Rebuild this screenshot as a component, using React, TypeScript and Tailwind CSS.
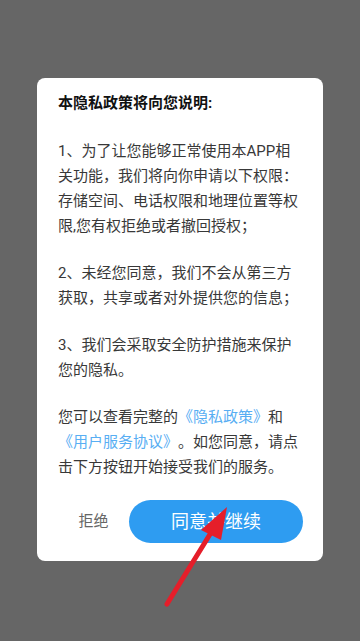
import React from "react";

export default function App() {
  return (
    <div
      className="relative w-[360px] h-[641px] bg-[#666666] overflow-hidden [text-spacing-trim:space-all]"
      style={{ fontFamily: 'Roboto, "Noto Sans CJK SC", sans-serif' }}
    >
      <div className="pt-[78px] flex justify-center">
        <div className="w-[286px] bg-white rounded-[8px] pt-[13px] pb-[18px]">
          <div className="px-[21px] text-[15px] leading-[25px] text-[#383838]">
            <p className="font-bold text-[#111]">本隐私政策将向您说明:</p>
            <p className="mt-[23px]">
              1、为了让您能够正常使用本APP相关功能，我们将向你申请以下权限：存储空间、电话权限和地理位置等权限,您有权拒绝或者撤回授权；
            </p>
            <p className="mt-[22px]">
              2、未经您同意，我们不会从第三方获取，共享或者对外提供您的信息；
            </p>
            <p className="mt-[22px]">3、我们会采取安全防护措施来保护您的隐私。</p>
            <p className="mt-[22px]">
              您可以查看完整的<span className="text-[#58AEF3]">《隐私政策》</span>和<span className="text-[#58AEF3]">《用户服务协议》</span>。如您同意，请点击下方按钮开始接受我们的服务。
            </p>
          </div>
          <div className="mt-[20px] flex items-center pl-[21px] pr-[20px]">
            <div className="flex-1 text-center text-[15px] text-[#666]">拒绝</div>
            <button className="w-[174px] h-[43px] rounded-full bg-[#2E9CF1] text-white text-[18px]">
              同意并继续
            </button>
          </div>
        </div>
      </div>
      <svg
        className="absolute left-0 top-0 pointer-events-none"
        width="360"
        height="641"
        viewBox="0 0 360 641"
      >
        <line x1="167" y1="604" x2="212" y2="531" stroke="#E51E2A" strokeWidth="5" strokeLinecap="round" />
        <polygon points="227,507 201,530 221,540" fill="#E51E2A" />
      </svg>
    </div>
  );
}
